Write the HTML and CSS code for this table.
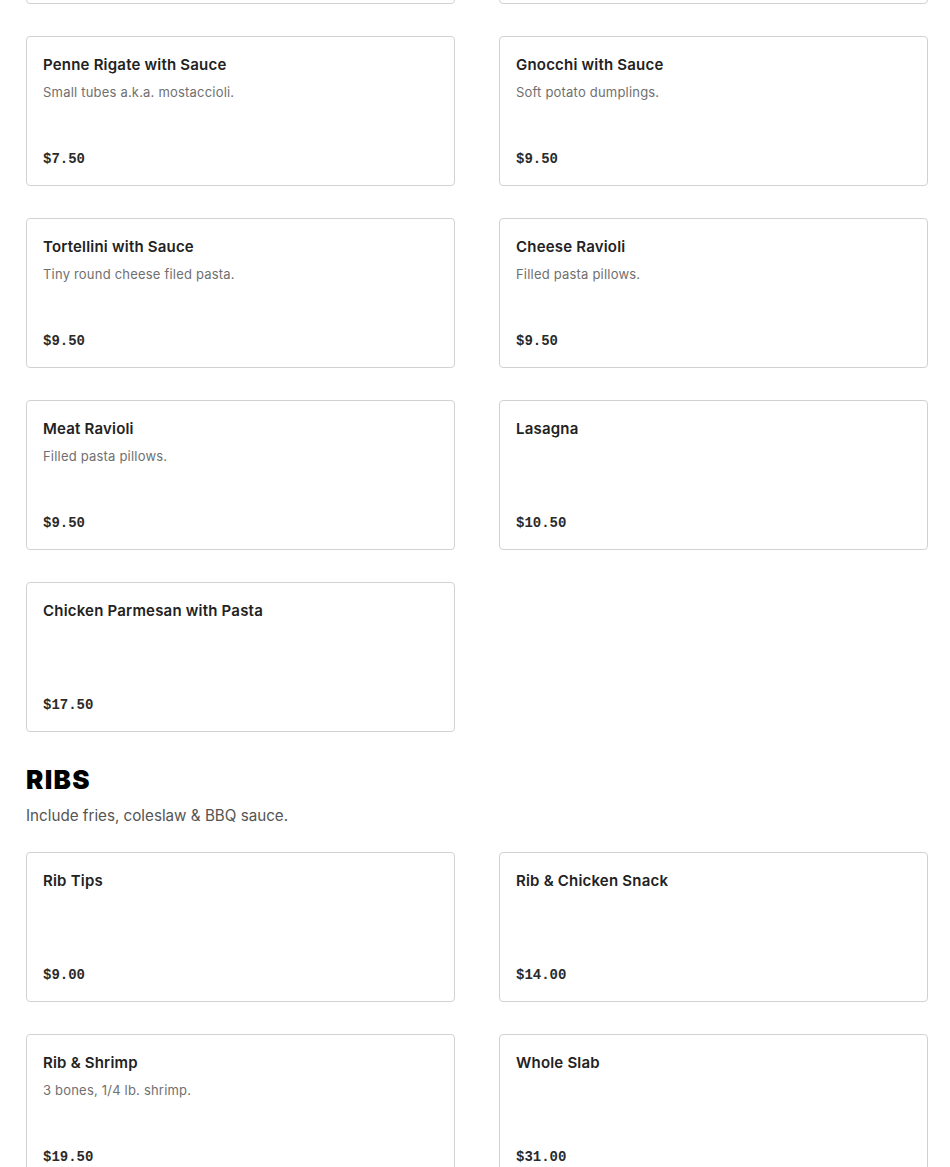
FILE: index.html
```html
<!DOCTYPE html>
<html lang="en">
<head>
<meta charset="utf-8">
<title>Menu</title>
<link rel="stylesheet" href="styles.css">
</head>
<body>
<main class="menu">
  <section class="section">
    <div class="grid">
      <div class="card card-prev" aria-hidden="true"></div>
      <div class="card card-prev" aria-hidden="true"></div>
      <div class="card"><div class="card-title">Penne Rigate with Sauce</div><div class="card-desc">Small tubes a.k.a. mostaccioli.</div><div class="card-price">$7.50</div></div>
      <div class="card"><div class="card-title">Gnocchi with Sauce</div><div class="card-desc">Soft potato dumplings.</div><div class="card-price">$9.50</div></div>
      <div class="card"><div class="card-title">Tortellini with Sauce</div><div class="card-desc">Tiny round cheese filed pasta.</div><div class="card-price">$9.50</div></div>
      <div class="card"><div class="card-title">Cheese Ravioli</div><div class="card-desc">Filled pasta pillows.</div><div class="card-price">$9.50</div></div>
      <div class="card"><div class="card-title">Meat Ravioli</div><div class="card-desc">Filled pasta pillows.</div><div class="card-price">$9.50</div></div>
      <div class="card"><div class="card-title">Lasagna</div><div class="card-price">$10.50</div></div>
      <div class="card"><div class="card-title">Chicken Parmesan with Pasta</div><div class="card-price">$17.50</div></div>
    </div>
  </section>
  <section class="section">
    <h2 class="section-title">RIBS</h2>
    <p class="section-desc">Include fries, coleslaw &amp; BBQ sauce.</p>
    <div class="grid">
      <div class="card"><div class="card-title">Rib Tips</div><div class="card-price">$9.00</div></div>
      <div class="card"><div class="card-title">Rib &amp; Chicken Snack</div><div class="card-price">$14.00</div></div>
      <div class="card"><div class="card-title">Rib &amp; Shrimp</div><div class="card-desc">3 bones, 1/4 lb. shrimp.</div><div class="card-price">$19.50</div></div>
      <div class="card"><div class="card-title">Whole Slab</div><div class="card-price">$31.00</div></div>
    </div>
  </section>
</main>
</body>
</html>
```
FILE: styles.css
```css
html, body {
  margin: 0;
  padding: 0;
  background: #fff;
}
body {
  font-family: Inter, "Noto Sans", "Liberation Sans", sans-serif;
  color: #222;
  overflow: hidden;
}
.menu {
  width: 902px;
  padding-left: 26px;
  margin-top: -146px;
}
.section + .section {
  margin-top: 32px;
}
.section-title {
  margin: 0;
  font-size: 26px;
  line-height: 32px;
  font-weight: 900;
  color: #000;
  letter-spacing: 1.3px;
}
.section-desc {
  margin: 8px 0 24px;
  font-size: 15.2px;
  line-height: 24px;
  color: #555;
}
.grid {
  display: grid;
  grid-template-columns: 429px 429px;
  column-gap: 44px;
  row-gap: 32px;
}
.card {
  box-sizing: border-box;
  height: 150px;
  border: 1px solid #d2d2d2;
  border-radius: 4px;
  padding: 18px 16px 16px;
  display: flex;
  flex-direction: column;
}
.card-title {
  font-size: 15px;
  line-height: 20px;
  font-weight: 600;
  color: #222;
  letter-spacing: 0.2px;
}
.card-desc {
  margin-top: 7px;
  font-size: 13px;
  line-height: 20px;
  color: #707070;
  letter-spacing: 0.2px;
}
.card-price {
  margin-top: auto;
  font-family: "Liberation Mono", "DejaVu Sans Mono", monospace;
  font-weight: 700;
  font-size: 14px;
  line-height: 20px;
  color: #2a2a2a;
}
```
